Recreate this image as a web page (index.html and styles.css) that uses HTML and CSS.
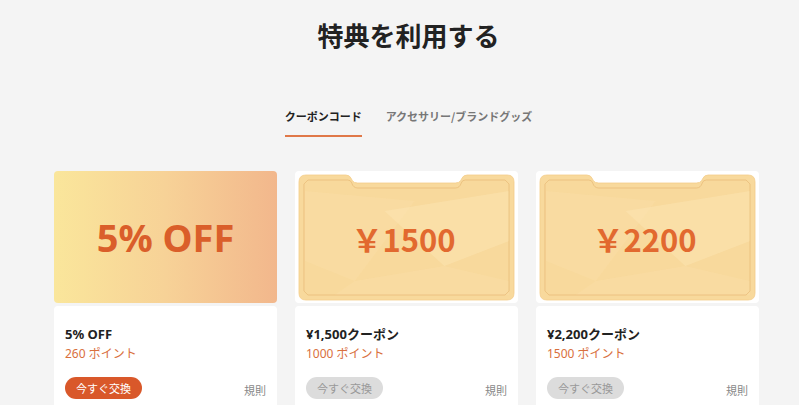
FILE: index.html
```html
<!DOCTYPE html>
<html lang="ja">
<head>
  <meta charset="UTF-8">
  <meta name="viewport" content="width=device-width, initial-scale=1.0">
  <title>特典を利用する</title>
  <link rel="stylesheet" href="styles.css">
</head>
<body>
  <main class="page">
    <h1 class="page-title">特典を利用する</h1>

    <!-- Tabs -->
    <ul class="tabs">
      <li class="tab active">クーポンコード</li>
      <li class="tab">アクセサリー/ブランドグッズ</li>
    </ul>

    <!-- Coupon cards -->
    <div class="cards">
      <div class="card">
        <div class="card-img gradient">
          <span class="big-off">5% OFF</span>
        </div>
        <div class="card-body">
          <h3 class="card-title">5% OFF</h3>
          <p class="points">260 ポイント</p>
          <div class="card-foot">
            <button class="btn">今すぐ交換</button>
            <span class="rules">規則</span>
          </div>
        </div>
      </div>

      <div class="card">
        <div class="card-img ticket-box">
          <svg class="ticket" viewBox="0 0 224 132" preserveAspectRatio="none">
            <path class="ticket-shape" d="M11,4 H51 Q55,4 56.5,7.5 L57.5,9.5 Q59,12 63,12 H161 Q165,12 166.5,9.5 L167.5,7.5 Q169,4 173,4 H213 Q220,4 220,11 V122 Q220,129 213,129 H11 Q4,129 4,122 V11 Q4,4 11,4 Z"/>
            <polygon class="facet" points="10,20 120,30 60,110 10,90"/>
            <polygon class="facet light" points="90,40 215,20 215,70 150,95"/>
            <polygon class="facet" points="60,110 150,95 215,110 215,124 40,124"/>
            <path class="ticket-line" d="M13,9 H53 Q56,9 57,12 Q58.5,17 63,17 H161 Q165.5,17 167,12 Q168,9 171,9 H211 L215,13 V120 L211,124 H13 L9,120 V13 Z"/>
          </svg>
          <span class="yen">￥1500</span>
        </div>
        <div class="card-body">
          <h3 class="card-title">¥1,500クーポン</h3>
          <p class="points">1000 ポイント</p>
          <div class="card-foot">
            <button class="btn disabled">今すぐ交換</button>
            <span class="rules">規則</span>
          </div>
        </div>
      </div>

      <div class="card">
        <div class="card-img ticket-box">
          <svg class="ticket" viewBox="0 0 224 132" preserveAspectRatio="none">
            <path class="ticket-shape" d="M11,4 H51 Q55,4 56.5,7.5 L57.5,9.5 Q59,12 63,12 H161 Q165,12 166.5,9.5 L167.5,7.5 Q169,4 173,4 H213 Q220,4 220,11 V122 Q220,129 213,129 H11 Q4,129 4,122 V11 Q4,4 11,4 Z"/>
            <polygon class="facet" points="10,20 120,30 60,110 10,90"/>
            <polygon class="facet light" points="90,40 215,20 215,70 150,95"/>
            <polygon class="facet" points="60,110 150,95 215,110 215,124 40,124"/>
            <path class="ticket-line" d="M13,9 H53 Q56,9 57,12 Q58.5,17 63,17 H161 Q165.5,17 167,12 Q168,9 171,9 H211 L215,13 V120 L211,124 H13 L9,120 V13 Z"/>
          </svg>
          <span class="yen">￥2200</span>
        </div>
        <div class="card-body">
          <h3 class="card-title">¥2,200クーポン</h3>
          <p class="points">1500 ポイント</p>
          <div class="card-foot">
            <button class="btn disabled">今すぐ交換</button>
            <span class="rules">規則</span>
          </div>
        </div>
      </div>
    </div>
  </main>
</body>
</html>
```

FILE: styles.css
```css
/* Basic Reset */
* {
  margin: 0;
  padding: 0;
  box-sizing: border-box;
}

body {
  font-family: "Noto Sans", "Noto Sans CJK JP", sans-serif;
  background: #f4f4f4;
  color: #222;
  height: 100vh;
  overflow: hidden;
}

.page {
  width: 705px;
  margin-left: 54px;
}

.page-title {
  font-family: "Noto Sans CJK JP", sans-serif;
  font-size: 26px;
  font-weight: 700;
  text-align: center;
  line-height: 36px;
  padding-top: 17px;
  padding-left: 4px;
  color: #222;
}

/* Tabs */
.tabs {
  list-style: none;
  display: flex;
  justify-content: center;
  gap: 24px;
  margin-top: 55px;
  padding-left: 4px;
}

.tab {
  font-family: "Noto Sans CJK JP", sans-serif;
  font-size: 11px;
  font-weight: 700;
  color: #777;
  line-height: 16px;
  padding-bottom: 11px;
  border-bottom: 2px solid transparent;
}

.tab.active {
  color: #222;
  border-bottom-color: #e07848;
}

/* Cards */
.cards {
  display: grid;
  grid-template-columns: repeat(3, 1fr);
  gap: 18px;
  margin-top: 34px;
}

.card {
  display: flex;
  flex-direction: column;
  gap: 3px;
}

.card-img {
  height: 132px;
  border-radius: 4px;
  display: grid;
  place-items: center;
}

.card-img > * {
  grid-area: 1 / 1;
}

.gradient {
  background: linear-gradient(90deg, #fae69b 0%, #f7d297 50%, #f2b78c 100%);
}

.big-off {
  font-size: 38px;
  font-weight: 700;
  color: #da5e2a;
}

.ticket-box {
  background: #fff;
}

.ticket {
  width: 100%;
  height: 100%;
}

.ticket-shape {
  fill: #f8d99c;
  stroke: #f4cd8a;
  stroke-width: 0.8;
}

.facet {
  fill: #fbe2ad;
  opacity: 0.3;
}

.facet.light {
  fill: #fde6b6;
  opacity: 0.45;
}

.ticket-line {
  fill: none;
  stroke: #e4b46e;
  stroke-width: 0.6;
}

.yen {
  font-family: "Noto Sans CJK JP", sans-serif;
  font-size: 31px;
  font-weight: 700;
  color: #e2692f;
  margin-left: -6px;
  margin-top: 2px;
}

.card-body {
  background: #fff;
  border-radius: 4px 4px 0 0;
  padding: 18px 11px 20px;
  height: 110px;
}

.card-title {
  font-size: 13px;
  font-weight: 700;
  line-height: 20px;
  color: #222;
}

.points {
  font-size: 12px;
  line-height: 20px;
  color: #d9703e;
}

.card-foot {
  display: flex;
  justify-content: space-between;
  align-items: center;
  margin-top: 13px;
}

.btn {
  font-family: "Noto Sans CJK JP", sans-serif;
  font-size: 11px;
  border: none;
  border-radius: 11px;
  width: 77px;
  height: 22px;
  background: #d9582a;
  color: #fff;
  cursor: pointer;
}

.btn.disabled {
  background: #dcdcdc;
  color: #999;
  cursor: default;
}

.rules {
  font-family: "Noto Sans CJK JP", sans-serif;
  font-size: 11px;
  color: #888;
  margin-top: 4px;
}
```
